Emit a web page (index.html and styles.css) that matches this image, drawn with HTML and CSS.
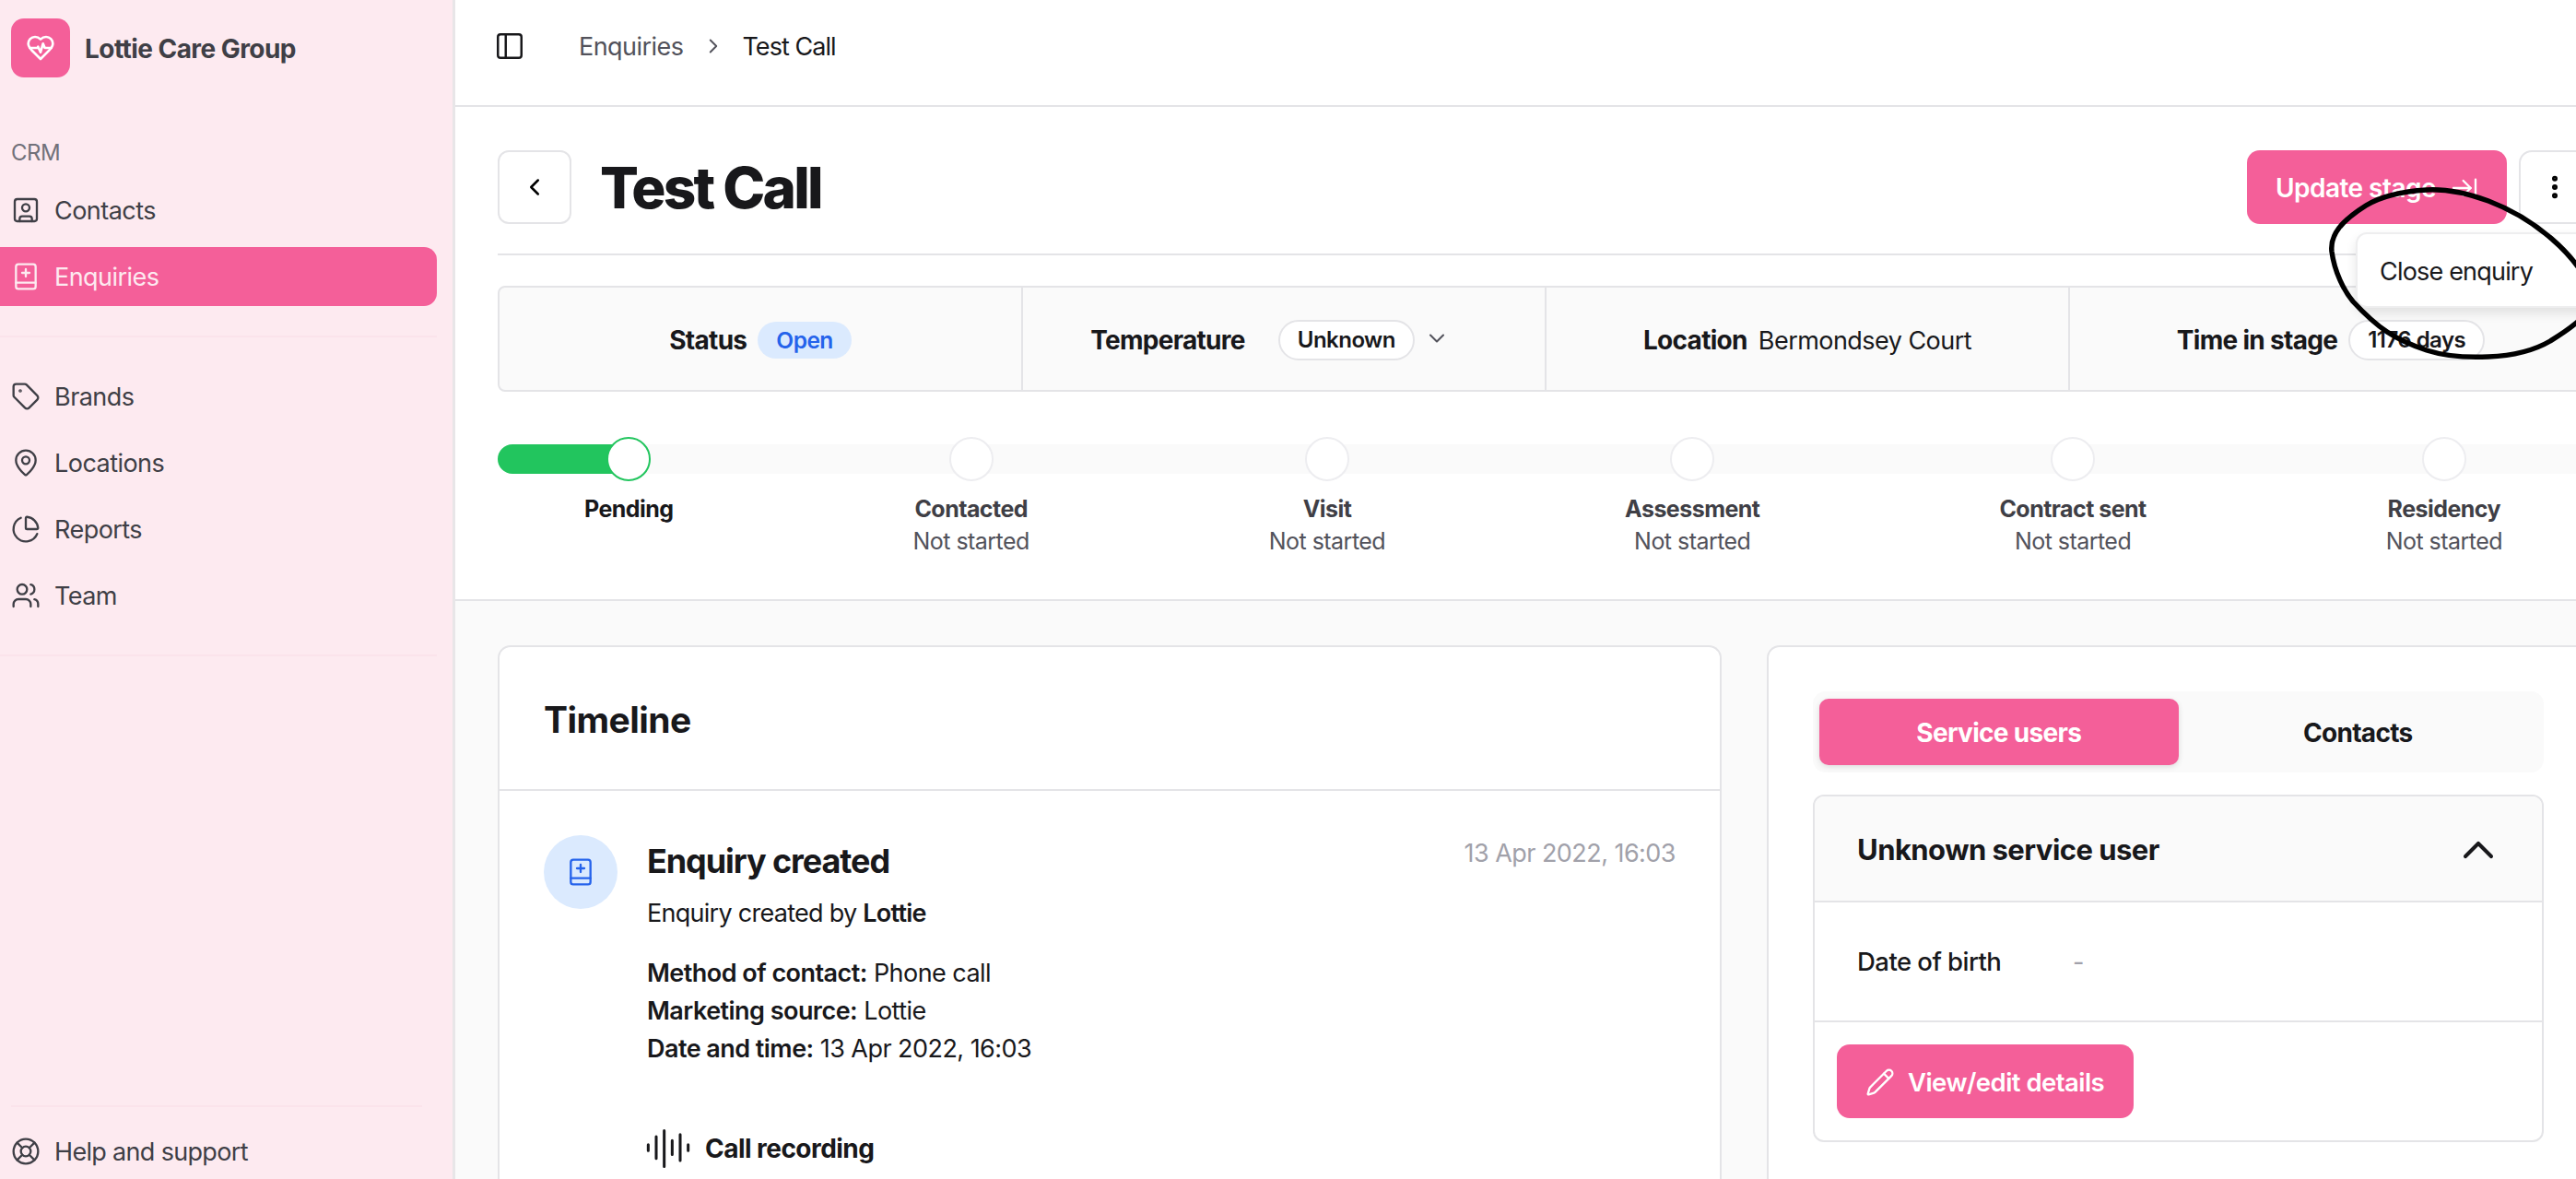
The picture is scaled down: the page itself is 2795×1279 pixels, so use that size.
FILE: index.html
```html
<!DOCTYPE html>
<html lang="en">
<head>
    <meta charset="UTF-8">
    <title>Test Call</title>
    <link rel="stylesheet" href="styles.css">
</head>
<body>
    <aside class="sidebar">
        <div class="brand">
            <div class="brand-logo">
                <svg class="icon icon-logo" viewBox="0 0 24 24"><path d="M19 14c1.49-1.46 3-3.21 3-5.5A5.5 5.5 0 0 0 16.5 3c-1.76 0-3 .5-4.5 2-1.5-1.5-2.74-2-4.5-2A5.5 5.5 0 0 0 2 8.5c0 2.3 1.5 4.05 3 5.5l7 7Z"/><path d="M3.22 12H9.5l.5-1 2 4.5 2-7 1.5 3.5h5.27"/></svg>
            </div>
            <span class="brand-name">Lottie Care Group</span>
        </div>
        <div class="nav-label">CRM</div>
        <nav class="nav-group">
            <a class="nav-item">
                <svg class="icon" viewBox="0 0 24 24"><rect x="3" y="3" width="18" height="18" rx="2"/><circle cx="12" cy="10" r="3"/><path d="M7 21v-2a2 2 0 0 1 2-2h6a2 2 0 0 1 2 2v2"/></svg>
                Contacts
            </a>
            <a class="nav-item active">
                <svg class="icon" viewBox="0 0 24 24"><rect x="4" y="2" width="16" height="20" rx="2"/><path d="M4 17h16M12 6v6M9 9h6"/></svg>
                Enquiries
            </a>
        </nav>
        <div class="nav-divider"></div>
        <nav class="nav-group">
            <a class="nav-item">
                <svg class="icon" viewBox="0 0 24 24"><path d="M12.586 2.586A2 2 0 0 0 11.172 2H4a2 2 0 0 0-2 2v7.172a2 2 0 0 0 .586 1.414l8.704 8.704a2.426 2.426 0 0 0 3.42 0l6.58-6.58a2.426 2.426 0 0 0 0-3.42z"/><circle cx="7.5" cy="7.5" r=".5"/></svg>
                Brands
            </a>
            <a class="nav-item">
                <svg class="icon" viewBox="0 0 24 24"><path d="M20 10c0 4.993-5.539 10.193-7.399 11.799a1 1 0 0 1-1.202 0C9.539 20.193 4 14.993 4 10a8 8 0 0 1 16 0"/><circle cx="12" cy="10" r="3"/></svg>
                Locations
            </a>
            <a class="nav-item">
                <svg class="icon" viewBox="0 0 24 24"><path d="M21 12c.552 0 1.005-.449.95-.998a10 10 0 0 0-8.953-8.951c-.55-.055-.998.398-.998.95v8a1 1 0 0 0 1 1z"/><path d="M21.21 15.89A10 10 0 1 1 8 2.83"/></svg>
                Reports
            </a>
            <a class="nav-item">
                <svg class="icon" viewBox="0 0 24 24"><path d="M16 21v-2a4 4 0 0 0-4-4H6a4 4 0 0 0-4 4v2"/><circle cx="9" cy="7" r="4"/><path d="M22 21v-2a4 4 0 0 0-3-3.87"/><path d="M16 3.13a4 4 0 0 1 0 7.75"/></svg>
                Team
            </a>
        </nav>
        <div class="nav-divider"></div>
        <div class="sidebar-footer">
            <div class="nav-divider divider-footer"></div>
            <a class="nav-item">
                <svg class="icon" viewBox="0 0 24 24"><circle cx="12" cy="12" r="10"/><path d="m4.93 4.93 4.24 4.24M14.83 9.17l4.24-4.24M14.83 14.83l4.24 4.24M9.17 14.83l-4.24 4.24"/><circle cx="12" cy="12" r="4"/></svg>
                Help and support
            </a>
        </div>
    </aside>

    <main class="main">
        <header class="topbar">
            <svg class="icon icon-panel" viewBox="0 0 24 24"><rect x="3" y="3" width="18" height="18" rx="2"/><path d="M9 3v18"/></svg>
            <span class="crumb">Enquiries</span>
            <svg class="icon icon-crumb" viewBox="0 0 24 24"><path d="m9 18 6-6-6-6"/></svg>
            <span class="crumb crumb-current">Test Call</span>
        </header>

        <section class="summary">
            <div class="title-row">
                <button class="back-button">
                    <svg class="icon icon-back" viewBox="0 0 24 24"><path d="m15 18-6-6 6-6"/></svg>
                </button>
                <h1>Test Call</h1>
                <div class="title-actions">
                    <button class="primary-button update-button">
                        Update stage
                        <svg class="icon" viewBox="0 0 24 24"><path d="M17 12H3"/><path d="m11 18 6-6-6-6"/><path d="M21 5v14"/></svg>
                    </button>
                    <button class="more-button">
                        <svg class="icon icon-more" viewBox="0 0 24 24"><circle cx="12" cy="5" r="1"/><circle cx="12" cy="12" r="1"/><circle cx="12" cy="19" r="1"/></svg>
                    </button>
                    <div class="dropdown">Close enquiry</div>
                </div>
            </div>

            <div class="stats">
                <div class="stat">
                    <strong>Status</strong>
                    <span class="badge-open">Open</span>
                </div>
                <div class="stat stat-temp">
                    <strong>Temperature</strong>
                    <span class="pill">Unknown</span>
                    <svg class="icon icon-down" viewBox="0 0 24 24"><path d="m6 9 6 6 6-6"/></svg>
                </div>
                <div class="stat stat-location">
                    <strong>Location</strong>
                    <span>Bermondsey Court</span>
                </div>
                <div class="stat">
                    <strong>Time in stage</strong>
                    <span class="pill">1176 days</span>
                </div>
            </div>

            <div class="progress">
                <div class="progress-track"></div>
                <div class="progress-fill"></div>
                <div class="steps">
                    <div class="step step-current">
                        <div class="step-dot"></div>
                        <div class="step-name">Pending</div>
                    </div>
                    <div class="step">
                        <div class="step-dot"></div>
                        <div class="step-name">Contacted</div>
                        <div class="step-state">Not started</div>
                    </div>
                    <div class="step">
                        <div class="step-dot"></div>
                        <div class="step-name">Visit</div>
                        <div class="step-state">Not started</div>
                    </div>
                    <div class="step">
                        <div class="step-dot"></div>
                        <div class="step-name">Assessment</div>
                        <div class="step-state">Not started</div>
                    </div>
                    <div class="step">
                        <div class="step-dot"></div>
                        <div class="step-name">Contract sent</div>
                        <div class="step-state">Not started</div>
                    </div>
                    <div class="step">
                        <div class="step-dot"></div>
                        <div class="step-name">Residency</div>
                        <div class="step-state">Not started</div>
                    </div>
                </div>
            </div>
        </section>

        <section class="content">
            <div class="card timeline">
                <div class="timeline-head">Timeline</div>
                <div class="timeline-item">
                    <div class="item-icon">
                        <svg class="icon" viewBox="0 0 24 24"><rect x="4" y="2" width="16" height="20" rx="2"/><path d="M4 17h16M12 6v6M9 9h6"/></svg>
                    </div>
                    <div class="item-body">
                        <div class="item-top">
                            <div class="item-title">Enquiry created</div>
                            <div class="item-date">13 Apr 2022, 16:03</div>
                        </div>
                        <p class="item-by">Enquiry created by <b>Lottie</b></p>
                        <p class="item-details">
                            <b>Method of contact:</b> Phone call<br>
                            <b>Marketing source:</b> Lottie<br>
                            <b>Date and time:</b> 13 Apr 2022, 16:03
                        </p>
                        <div class="recording">
                            <svg class="icon icon-audio" viewBox="0 0 24 24"><path d="M2 10v3M6 6v11M10 3v18M14 8v7M18 5v13M22 10v3"/></svg>
                            Call recording
                        </div>
                    </div>
                </div>
            </div>

            <div class="card side">
                <div class="tabs">
                    <div class="tab tab-active">Service users</div>
                    <div class="tab">Contacts</div>
                </div>
                <div class="accordion">
                    <div class="accordion-head">
                        <span>Unknown service user</span>
                        <svg class="icon icon-up" viewBox="0 0 24 24"><path d="m18 15-6-6-6 6"/></svg>
                    </div>
                    <div class="accordion-row">
                        <span class="row-label">Date of birth</span>
                        <span class="row-value">-</span>
                    </div>
                    <div class="accordion-foot">
                        <button class="primary-button edit-button">
                            <svg class="icon" viewBox="0 0 24 24"><path d="M21.174 6.812a1 1 0 0 0-3.986-3.987L3.842 16.174a2 2 0 0 0-.5.83l-1.321 4.352a.5.5 0 0 0 .623.622l4.353-1.32a2 2 0 0 0 .83-.497z"/><path d="m15 5 4 4"/></svg>
                            View/edit details
                        </button>
                    </div>
                </div>
            </div>
        </section>
    </main>

    <!-- обводка от руки поверх скриншота -->
    <svg class="scribble" viewBox="0 0 2795 1279"><path d="M2815 325C2800 275 2745 235 2700 218C2675 209 2650 205 2633 206C2600 208 2580 215 2567 223C2540 240 2528 255 2530 273C2533 295 2543 315 2553 327C2565 340 2575 350 2590 360C2605 370 2618 375 2633 380C2655 387 2680 388 2700 387C2725 386 2750 380 2767 370C2780 362 2808 345 2815 325"/></svg>
</body>
</html>
```

FILE: styles.css
```css
* {
    box-sizing: border-box;
}
html, body {
    height: 100%;
}
body {
    margin: 0;
    display: flex;
    width: 2795px;
    height: 1279px;
    overflow: hidden;
    position: relative;
    font-family: Inter, "Liberation Sans", sans-serif;
    font-size: 27px;
    letter-spacing: -0.02em;
    color: #18181b;
    background-color: #fff;
}
p, h1 {
    margin: 0;
}
button {
    font: inherit;
    letter-spacing: inherit;
    border: none;
    background: none;
    padding: 0;
}
b, strong {
    font-weight: 600;
}
.icon {
    width: 32px;
    height: 32px;
    flex: none;
    fill: none;
    stroke: currentColor;
    stroke-width: 1.75;
    stroke-linecap: round;
    stroke-linejoin: round;
}

/* Боковая панель */
.sidebar {
    flex: none;
    width: 494px;
    height: 100%;
    display: flex;
    flex-direction: column;
    background-color: #fdeaf0;
    border-right: 3px solid #e8e6e8;
    color: #3f3f46;
}
.brand {
    display: flex;
    align-items: center;
    gap: 16px;
    height: 64px;
    margin: 20px 0 0 12px;
}
.brand-logo {
    width: 64px;
    height: 64px;
    display: flex;
    align-items: center;
    justify-content: center;
    background-color: #f45f99;
    border-radius: 14px;
    color: #fff;
}
.icon-logo {
    width: 32px;
    height: 32px;
    stroke-width: 2;
}
.brand-name {
    padding-top: 2px;
    font-size: 28px;
    font-weight: 700;
    letter-spacing: -0.02em;
}
.nav-label {
    margin: 64px 0 0 12px;
    height: 36px;
    line-height: 36px;
    font-size: 24px;
    color: #71717a;
}
.nav-group {
    display: flex;
    flex-direction: column;
    gap: 8px;
    margin-top: 12px;
}
.nav-item {
    display: flex;
    align-items: center;
    gap: 15px;
    height: 64px;
    padding: 1px 0 0 12px;
    width: 474px;
    border-radius: 0 14px 14px 0;
}
.nav-item .icon {
    margin-top: -1px;
}
.nav-item.active {
    background-color: #f45f99;
    color: #fdeaf0;
}
.nav-divider {
    width: 474px;
    height: 2px;
    margin-top: 32px;
    background-color: #fbe3eb;
}
.nav-divider + .nav-group {
    margin-top: 32px;
}
.sidebar-footer {
    margin-top: auto;
    margin-bottom: -2px;
}
.divider-footer {
    width: 446px;
    margin: 0 0 16px 12px;
}
.sidebar-footer .nav-item {
    letter-spacing: -0.025em;
}

/* Основная часть */
.main {
    flex: none;
    width: 2364px;
    display: flex;
    flex-direction: column;
    height: 100%;
}
.topbar {
    flex: none;
    display: flex;
    align-items: center;
    height: 116px;
    padding: 2px 0 16px 42px;
    border-bottom: 2px solid #e4e4e7;
}
.icon-panel {
    width: 34px;
    height: 34px;
    color: #18181b;
    margin-right: 58px;
}
.crumb {
    color: #52525b;
}
.crumb-current {
    color: #18181b;
    letter-spacing: -0.035em;
}
.icon-crumb {
    color: #52525b;
    width: 26px;
    height: 26px;
    margin: 0 18px 0 20px;
}
.summary {
    flex: none;
    padding: 48px 46px 0;
    height: 536px;
    border-bottom: 2px solid #e4e4e7;
}
.title-row {
    display: flex;
    align-items: center;
    height: 113px;
    border-bottom: 2px solid #e4e4e7;
    padding-bottom: 33px;
}
.back-button {
    width: 80px;
    height: 80px;
    display: flex;
    align-items: center;
    justify-content: center;
    border: 2px solid #e4e4e7;
    border-radius: 12px;
}
.icon-back {
    width: 30px;
    height: 30px;
    stroke-width: 2;
}
h1 {
    margin-left: 31px;
    font-size: 62px;
    font-weight: 800;
    letter-spacing: -0.045em;
}
.title-actions {
    position: relative;
    display: flex;
    gap: 13px;
    margin-left: auto;
}
.primary-button {
    display: flex;
    align-items: center;
    background-color: #f45f99;
    color: #fff;
    font-weight: 600;
    border-radius: 14px;
}
.update-button {
    width: 282px;
    height: 80px;
    padding: 2px 0 0 31px;
    gap: 15px;
    font-size: 28px;
}
.more-button {
    width: 79px;
    height: 80px;
    padding-right: 2px;
    display: flex;
    align-items: center;
    justify-content: center;
    border: 2px solid #e4e4e7;
    border-radius: 14px;
}
.icon-more {
    stroke-width: 2.5;
}
.dropdown {
    position: absolute;
    top: 89px;
    left: 118px;
    width: 260px;
    height: 82px;
    padding: 26px 24px;
    line-height: 30px;
    letter-spacing: -0.03em;
    background: #fff;
    border: 2px solid #eeeeef;
    border-radius: 12px;
    color: #18181b;
    box-shadow: 0 6px 12px rgba(0, 0, 0, 0.1);
}
.stats {
    display: grid;
    grid-template-columns: repeat(4, 568px);
    height: 115px;
    margin-top: 33px;
    background-color: #fafafa;
    border: 2px solid #e4e4e7;
    border-radius: 8px;
}
.stat {
    display: flex;
    align-items: center;
    justify-content: center;
    gap: 12px;
    padding-top: 3px;
    border-right: 2px solid #e4e4e7;
}
.stat strong {
    font-size: 28px;
    font-weight: 700;
    letter-spacing: -0.025em;
}
.stat-temp {
    gap: 0;
    padding-right: 30px;
}
.stat-temp strong {
    margin-right: 36px;
}
.badge-open {
    height: 40px;
    line-height: 40px;
    padding: 0 20px;
    background-color: #dbeafe;
    border-radius: 20px;
    color: #2563eb;
    font-size: 24.5px;
    font-weight: 600;
}
.pill {
    height: 44px;
    line-height: 40px;
    padding: 0 19px;
    background-color: #fff;
    border: 2px solid #e4e4e7;
    border-radius: 22px;
    font-size: 24px;
    font-weight: 600;
}
.icon-down {
    margin-left: 10px;
    width: 28px;
    height: 28px;
    margin-top: -4px;
    color: #52525b;
}

/* Шкала этапов */
.progress {
    position: relative;
    margin-top: 49px;
}
.progress-track {
    position: absolute;
    left: 0;
    right: 0;
    top: 8px;
    height: 32px;
    background-color: #fafafa;
    border-radius: 16px;
}
.progress-fill {
    position: absolute;
    left: 0;
    top: 8px;
    width: 142px;
    height: 32px;
    background-color: #22c55e;
    border-radius: 16px 0 0 16px;
}
.steps {
    position: relative;
    display: flex;
    gap: 260px;
    padding-left: 94px;
}
.step {
    display: flex;
    flex-direction: column;
    align-items: center;
    font-size: 25px;
    line-height: 35px;
    color: #52525b;
}
.step-dot {
    width: 48px;
    height: 48px;
    margin-bottom: 13px;
    border-radius: 50%;
    background-color: #fff;
    border: 2px solid #ededf0;
}
.step-name {
    font-weight: 700;
    color: #3f3f46;
}
.step-current .step-dot {
    border-color: #22c55e;
}
.step-current .step-name {
    color: #18181b;
}

/* Карточки */
.content {
    flex: 1;
    display: flex;
    gap: 49px;
    padding: 48px 46px 0;
    background-color: #fafafa;
    min-height: 0;
}
.card {
    background-color: #fff;
    border: 2px solid #e4e4e7;
    border-radius: 14px 14px 0 0;
    border-bottom: none;
}
.timeline {
    flex: none;
    width: 1328px;
}
.timeline-head {
    height: 156px;
    padding: 2px 48px 0;
    display: flex;
    align-items: center;
    border-bottom: 2px solid #e4e4e7;
    font-size: 39px;
    font-weight: 700;
}
.timeline-item {
    display: flex;
    gap: 32px;
    padding: 48px 48px 0;
}
.item-icon {
    flex: none;
    width: 80px;
    height: 80px;
    display: flex;
    align-items: center;
    justify-content: center;
    background-color: #dbeafe;
    border-radius: 50%;
    color: #2563eb;
}
.item-body {
    flex: 1;
}
.item-top {
    display: flex;
    justify-content: space-between;
    align-items: flex-start;
}
.item-title {
    font-size: 36px;
    font-weight: 700;
    letter-spacing: -0.03em;
    line-height: 44px;
    margin-top: 6px;
}
.item-date {
    color: #a1a1aa;
    line-height: 40px;
}
.item-by {
    margin-top: 15px;
    line-height: 40px;
    letter-spacing: -0.027em;
}
.item-details {
    margin-top: 24px;
    line-height: 41px;
}
.recording {
    display: flex;
    align-items: center;
    gap: 14px;
    margin-top: 62px;
    font-size: 28px;
    font-weight: 700;
}
.icon-audio {
    width: 52px;
    height: 52px;
    margin-left: -3px;
    stroke-width: 1.4;
}
.side {
    flex: none;
    width: 895px;
    padding: 48px 50px 0 48px;
}
.tabs {
    display: grid;
    grid-template-columns: 1fr 1fr;
    height: 88px;
    padding: 8px 7px;
    background-color: #fafafa;
    border-radius: 14px;
    font-size: 28px;
    font-weight: 700;
    letter-spacing: -0.025em;
}
.tab {
    display: flex;
    align-items: center;
    justify-content: center;
    padding-top: 2px;
    border-radius: 10px;
}
.tab-active {
    background-color: #f45f99;
    color: #fff;
    box-shadow: 0 2px 6px rgba(0, 0, 0, 0.12);
}
.accordion {
    margin-top: 24px;
    border: 2px solid #e4e4e7;
    border-radius: 12px;
    overflow: hidden;
}
.accordion-head {
    height: 115px;
    padding: 2px 41px 0 46px;
    display: flex;
    align-items: center;
    justify-content: space-between;
    background-color: #fafafa;
    border-bottom: 2px solid #e4e4e7;
    font-size: 31px;
    font-weight: 700;
}
.icon-up {
    width: 56px;
    height: 56px;
    color: #18181b;
    stroke-width: 1.75;
}
.accordion-row {
    height: 130px;
    padding: 0 46px;
    display: flex;
    align-items: center;
    border-bottom: 2px solid #e4e4e7;
}
.row-label {
    width: 234px;
    font-size: 27.5px;
    font-weight: 500;
}
.row-value {
    color: #a1a1aa;
}
.accordion-foot {
    padding: 24px;
    height: 128px;
}
.edit-button {
    width: 322px;
    height: 80px;
    padding: 2px 0 0 31px;
    gap: 14px;
    font-size: 27.5px;
}
.scribble {
    position: absolute;
    left: 0;
    top: 0;
    width: 2795px;
    height: 1279px;
    fill: none;
    stroke: #000;
    stroke-width: 5.5;
    pointer-events: none;
}
```
